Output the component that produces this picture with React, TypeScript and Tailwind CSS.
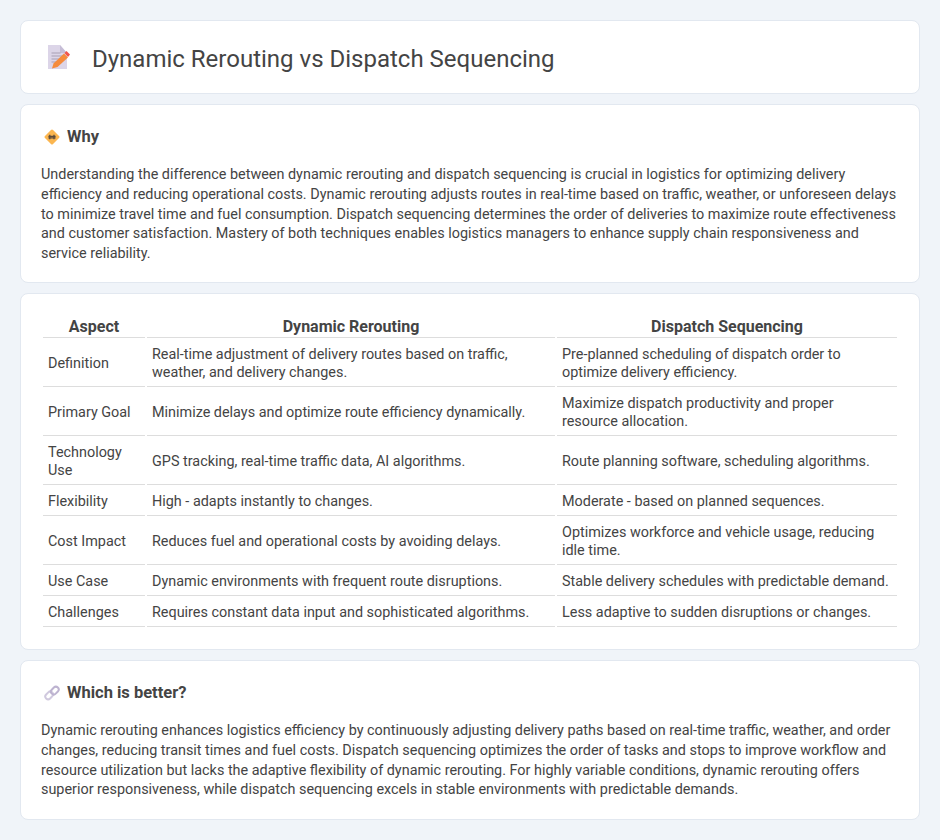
const rows = [
  ["Definition", "Real-time adjustment of delivery routes based on traffic, weather, and delivery changes.", "Pre-planned scheduling of dispatch order to optimize delivery efficiency."],
  ["Primary Goal", "Minimize delays and optimize route efficiency dynamically.", "Maximize dispatch productivity and proper resource allocation."],
  ["Technology Use", "GPS tracking, real-time traffic data, AI algorithms.", "Route planning software, scheduling algorithms."],
  ["Flexibility", "High - adapts instantly to changes.", "Moderate - based on planned sequences."],
  ["Cost Impact", "Reduces fuel and operational costs by avoiding delays.", "Optimizes workforce and vehicle usage, reducing idle time."],
  ["Use Case", "Dynamic environments with frequent route disruptions.", "Stable delivery schedules with predictable demand."],
  ["Challenges", "Requires constant data input and sophisticated algorithms.", "Less adaptive to sudden disruptions or changes."],
];

const DocIcon = () => (
  <svg width="22" height="24" viewBox="0 0 22 24" className="shrink-0">
    <path d="M0 0h12l7 8v16H0z" fill="#dcd5e8" />
    <path d="M12 0l7 8h-7z" fill="#c6bdd6" />
    <path d="M3.500 8h9M3.500 11h12M3.500 14h10M3.500 17h6" stroke="#a89fb4" strokeWidth="1" />
    <path d="M4 23.500l1.500-5L16 8.500l4 4L9.500 22z" fill="#f58b3c" />
    <path d="M16.500 8l2-2 3.500 3.500-2 2.500z" fill="#f2554c" />
  </svg>
);

const DiamondIcon = () => (
  <svg width="16" height="16" viewBox="0 0 16 16" className="shrink-0">
    <rect x="2.300" y="2.300" width="11.400" height="11.400" rx="1.500" transform="rotate(45 8 8)" fill="#fbb650" />
    <path d="M5.800 5.800v4.400M10 5.800v4.400M4.400 7.300h7.200M4.400 8.900h7.200" stroke="#5b4a3a" strokeWidth="1.300" />
  </svg>
);

const LinkIcon = () => (
  <svg width="16" height="16" viewBox="0 0 16 16" fill="none" className="shrink-0">
    <rect x="0.900" y="7.600" width="8.600" height="5.600" rx="2.800" transform="rotate(-45 5.200 10.400)" stroke="#d0c9de" strokeWidth="2" />
    <rect x="6.500" y="2.800" width="8.600" height="5.600" rx="2.800" transform="rotate(-45 10.800 5.600)" stroke="#bdb3d0" strokeWidth="2" />
  </svg>
);

export default function App() {
  return (
    <div className="min-h-[840px] bg-[#f0f4f9] px-5 py-5 font-['Roboto',sans-serif] text-[14.4px] leading-[19.8px] text-[#444444]">
      <div className="flex flex-col gap-2.5">
        <header className="flex h-[74px] items-center gap-[22px] rounded-lg border border-[#e2e8f0] bg-white pl-[27px]">
          <DocIcon />
          <h1 className="mt-[4px] text-2xl font-normal leading-[30px] text-[#444444]">Dynamic Rerouting vs Dispatch Sequencing</h1>
        </header>

        <section className="h-[179px] rounded-lg border border-[#e2e8f0] bg-white px-5 pt-[20px]">
          <h2 className="flex items-center gap-[7px] pl-[3px] text-[16.5px] font-bold leading-[24px]">
            <DiamondIcon />
            Why
          </h2>
          <p className="mt-[16px]">
            Understanding the difference between dynamic rerouting and dispatch sequencing is crucial in logistics for optimizing delivery efficiency and reducing operational costs. Dynamic rerouting adjusts routes in real-time based on traffic, weather, or unforeseen delays to minimize travel time and fuel consumption. Dispatch sequencing determines the order of deliveries to maximize route effectiveness and customer satisfaction. Mastery of both techniques enables logistics managers to enhance supply chain responsiveness and service reliability.
          </p>
        </section>

        <section className="h-[357px] rounded-lg border border-[#e2e8f0] bg-white px-5 pt-[20px]">
          <table className="w-full table-fixed border-separate border-spacing-[2px]">
            <colgroup>
              <col className="w-[102px]" />
              <col className="w-[408px]" />
              <col />
            </colgroup>
            <thead>
              <tr>
                <th className="border-b border-[#dddddd] px-[5px] pt-[1px] text-center text-base font-bold leading-[20px]">Aspect</th>
                <th className="border-b border-[#dddddd] px-[5px] pt-[1px] text-center text-base font-bold leading-[20px]">Dynamic Rerouting</th>
                <th className="border-b border-[#dddddd] px-[5px] pt-[1px] text-center text-base font-bold leading-[20px]">Dispatch Sequencing</th>
              </tr>
            </thead>
            <tbody>
              {rows.map((row) => (
                <tr key={row[0]}>
                  {row.map((cell) => (
                    <td key={cell} className="border-b border-[#dddddd] px-[5px] pb-[4px] pt-[6px] align-middle leading-[18px]">
                      {cell}
                    </td>
                  ))}
                </tr>
              ))}
            </tbody>
          </table>
        </section>

        <section className="h-[160px] rounded-lg border border-[#e2e8f0] bg-white px-5 pt-[20px]">
          <h2 className="flex items-center gap-[7px] pl-[3px] text-[16.5px] font-bold leading-[24px]">
            <LinkIcon />
            Which is better?
          </h2>
          <p className="mt-[16px]">
            Dynamic rerouting enhances logistics efficiency by continuously adjusting delivery paths based on real-time traffic, weather, and order changes, reducing transit times and fuel costs. Dispatch sequencing optimizes the order of tasks and stops to improve workflow and resource utilization but lacks the adaptive flexibility of dynamic rerouting. For highly variable conditions, dynamic rerouting offers superior responsiveness, while dispatch sequencing excels in stable environments with predictable demands.
          </p>
        </section>
      </div>
    </div>
  );
}
